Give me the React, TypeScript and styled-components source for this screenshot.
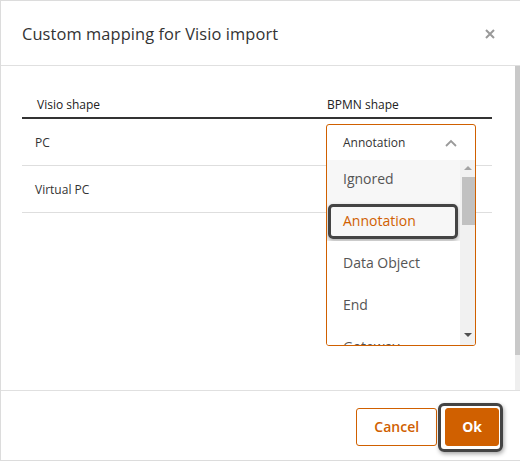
import React from "react";
import styled, { createGlobalStyle } from "styled-components";

const ORANGE = "#d06000";

const Global = createGlobalStyle`
  html, body { margin: 0; padding: 0; background: #fff; }
  body { font-family: "Open Sans", "Noto Sans", Arial, sans-serif; }
  * { box-sizing: border-box; }
`;

const Dialog = styled.div`
  width: 520px;
  height: 461px;
  border: 1px solid #dcdcdc;
  border-right: none;
  display: flex;
  flex-direction: column;
  background: #fff;
`;

const Header = styled.div`
  height: 65px;
  flex: none;
  display: flex;
  align-items: center;
  justify-content: space-between;
  padding: 1px 24px 0 21px;
  border-bottom: 1px solid #e0e0e0;
`;

const Title = styled.h1`
  margin: 0;
  font-size: 16.4px;
  font-weight: 400;
  color: #333;
  letter-spacing: 0.1px;
`;

const CloseBtn = styled.button`
  border: none;
  background: none;
  padding: 0;
  width: 12px;
  height: 12px;
  display: flex;
  cursor: pointer;
`;

const BodyWrap = styled.div`
  flex: 1;
  display: flex;
  min-height: 0;
  border-bottom: 1px solid #e0e0e0;
`;

const Body = styled.div`
  flex: 1;
  padding: 25px 23px 0 21px;
`;

const Scroll = styled.div`
  width: 5px;
  background: #efefef;
  display: flex;
  flex-direction: column;
`;

const ScrollThumb = styled.div`
  height: 289px;
  background: #c9c9c9;
`;

const Table = styled.div`
  display: grid;
  grid-template-columns: 304px 1fr;
`;

const HeadCell = styled.div<{ $pad: number }>`
  height: 28px;
  padding-left: ${(p) => p.$pad}px;
  font-size: 12px;
  color: #222;
  display: flex;
  align-items: center;
  border-bottom: 2px solid #333;
`;

const Cell = styled.div<{ $pad?: number }>`
  height: 47px;
  padding-left: ${(p) => p.$pad ?? 0}px;
  font-size: 12px;
  color: #333;
  display: flex;
  align-items: center;
  border-bottom: 1px solid #dedede;
`;

const SelectWrap = styled.div`
  position: relative;
  width: 150px;
  height: 36px;
`;

const SelectPanel = styled.div`
  position: absolute;
  left: 0;
  top: 0;
  width: 150px;
  border: 1px solid ${ORANGE};
  border-radius: 3px;
  background: #fff;
  z-index: 2;
  overflow: hidden;
`;

const Control = styled.div`
  height: 35px;
  display: flex;
  align-items: center;
  justify-content: space-between;
  padding: 0 18px 0 16px;
  font-size: 12px;
  color: #333;
`;

const ListBox = styled.div`
  height: 185px;
  display: flex;
`;

const Items = styled.div`
  flex: 1;
  overflow: hidden;
`;

const ItemTrack = styled.div`
  margin-top: -3px;
`;

const Item = styled.div<{ $shade?: boolean; $selected?: boolean }>`
  position: relative;
  height: 42px;
  padding-left: 16px;
  display: flex;
  align-items: center;
  font-size: 14px;
  color: ${(p) => (p.$selected ? ORANGE : "#555")};
  background: ${(p) => (p.$shade ? "#f7f7f7" : "#fff")};
  ${(p) =>
    p.$selected
      ? `&::after {
    content: "";
    position: absolute;
    left: 1px; right: 2px; top: 5px; bottom: 2px;
    border: 3px solid #444;
    border-radius: 5px;
    box-shadow: 0 2px 4px rgba(0,0,0,0.3);
  }`
      : ""}
`;

const ListScroll = styled.div`
  width: 15px;
  background: #f1f1f1;
  display: flex;
  flex-direction: column;
  align-items: center;
`;

const Arrow = styled.div<{ $up?: boolean }>`
  width: 0;
  height: 0;
  margin: ${(p) => (p.$up ? "6px 0 7px" : "auto 0 8px")};
  border-left: 4px solid transparent;
  border-right: 4px solid transparent;
  ${(p) =>
    p.$up ? "border-bottom: 4px solid #a3a3a3;" : "border-top: 4px solid #505050;"}
`;

const ListThumb = styled.div`
  width: 13px;
  margin-left: 1px;
  height: 48px;
  background: #c1c1c1;
`;

const Footer = styled.div`
  height: 69px;
  flex: none;
  display: flex;
  align-items: center;
  justify-content: flex-end;
  gap: 8px;
  padding: 2px 21px 0 0;
`;

const Button = styled.button<{ $primary?: boolean; $focus?: boolean }>`
  position: relative;
  height: 38px;
  padding: 0 ${(p) => (p.$primary ? 16 : 17)}px;
  border: 1px solid ${ORANGE};
  border-radius: 3px;
  background: ${(p) => (p.$primary ? ORANGE : "#fff")};
  color: ${(p) => (p.$primary ? "#fff" : ORANGE)};
  font-family: "Open Sans", Arial, sans-serif;
  font-size: 14px;
  font-weight: ${(p) => (p.$primary ? 700 : 600)};
  cursor: pointer;
  ${(p) =>
    p.$focus
      ? `&::after {
    content: "";
    position: absolute;
    left: -8px; right: -5px; top: -6px; bottom: -7px;
    border: 3px solid #444;
    border-radius: 6px;
    box-shadow: 1px 2px 4px rgba(0,0,0,0.35);
  }`
      : ""}
`;

const Chevron = () => (
  <svg width="12" height="8" viewBox="0 0 12 8">
    <path d="M1 7 L6 2 L11 7" fill="none" stroke="#9a9a9a" strokeWidth="1.8" />
  </svg>
);

const options = ["Ignored", "Annotation", "Data Object", "End", "Gateway"];

export default function App() {
  return (
    <>
      <Global />
      <Dialog>
        <Header>
          <Title>Custom mapping for Visio import</Title>
          <CloseBtn aria-label="close">
            <svg width="12" height="12" viewBox="0 0 12 12">
              <path d="M2 2 L10 10 M10 2 L2 10" stroke="#999" strokeWidth="2" />
            </svg>
          </CloseBtn>
        </Header>
        <BodyWrap>
          <Body>
            <Table>
              <HeadCell $pad={15}>Visio shape</HeadCell>
              <HeadCell $pad={1}>BPMN shape</HeadCell>
              <Cell $pad={13}>PC</Cell>
              <Cell>
                <SelectWrap>
                  <SelectPanel>
                    <Control>
                      <span>Annotation</span>
                      <Chevron />
                    </Control>
                    <ListBox>
                      <Items>
                        <ItemTrack>
                          {options.map((o, i) => (
                            <Item key={o} $shade={i < 2} $selected={i === 1}>
                              {o}
                            </Item>
                          ))}
                        </ItemTrack>
                      </Items>
                      <ListScroll>
                        <Arrow $up />
                        <ListThumb />
                        <Arrow />
                      </ListScroll>
                    </ListBox>
                  </SelectPanel>
                </SelectWrap>
              </Cell>
              <Cell $pad={13}>Virtual PC</Cell>
              <Cell />
            </Table>
          </Body>
          <Scroll>
            <ScrollThumb />
          </Scroll>
        </BodyWrap>
        <Footer>
          <Button>Cancel</Button>
          <Button $primary $focus>
            Ok
          </Button>
        </Footer>
      </Dialog>
    </>
  );
}
